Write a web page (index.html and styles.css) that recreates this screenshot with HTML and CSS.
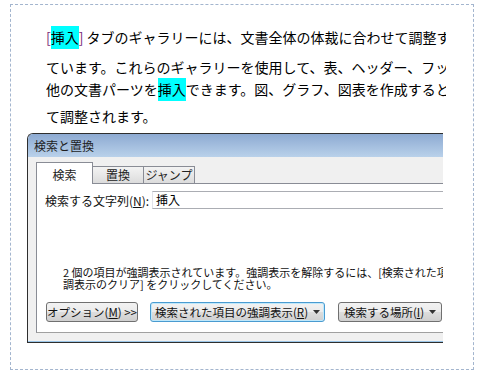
FILE: index.html
```html
<!DOCTYPE html>
<html lang="ja">
	<head>
		<meta charset="UTF-8" />
		<title>検索と置換</title>
		<link rel="stylesheet" href="styles.css">
	</head>
	<body>
		<div class="page">
			<div class="doc">
				<p class="line l1"><span class="bk">[</span><span class="hl">挿入</span><span class="bk">]</span> タブのギャラリーには、文書全体の体裁に合わせて調整するためのアイテムが含まれ</p>
				<p class="line l2">ています。これらのギャラリーを使用して、表、ヘッダー、フッター、リスト、表紙や、その</p>
				<p class="line l3">他の文書パーツを<span class="hl">挿入</span>できます。図、グラフ、図表を作成すると、現在の文書の体裁に合わせ</p>
				<p class="line l4">て調整されます。</p>
			</div>
			<div class="dialog">
				<div class="titlebar">検索と置換</div>
				<div class="frame">
					<div class="tabs">
						<div class="tab active">検索</div>
						<div class="tab">置換</div>
						<div class="tab">ジャンプ</div>
					</div>
					<div class="tabpage">
						<div class="field">
							<label>検索する文字列(<u>N</u>):</label>
							<div class="input">挿入</div>
						</div>
						<p class="msg">
							2 個の項目が強調表示されています。強調表示を解除するには、[検索された項目の強調表示] の [強<br />
							調表示のクリア] をクリックしてください。
						</p>
						<div class="buttons">
							<div class="btn opt"><span>オプション(<u>M</u>) &gt;&gt;</span></div>
							<div class="btn focus hilite"><span>検索された項目の強調表示(<u>R</u>)</span><svg class="caret" width="7" height="4" viewBox="0 0 7 4"><path d="M0 0h7L3.5 4z" fill="#333"/></svg></div>
							<div class="btn where"><span>検索する場所(<u>I</u>)</span><svg class="caret" width="7" height="4" viewBox="0 0 7 4"><path d="M0 0h7L3.5 4z" fill="#333"/></svg></div>
						</div>
					</div>
				</div>
			</div>
		</div>
	</body>
</html>
```

FILE: styles.css
```css
* {
	margin: 0;
	padding: 0;
	box-sizing: border-box;
}
body {
	font-family: "Noto Sans CJK JP", sans-serif;
	background-color: #fff;
	color: #000;
}
.page {
	width: 464px;
	height: 366px;
	margin: 4px 0 0 10px;
	border: 1px dashed #a3b5ce;
	padding: 21px 0 0 0;
}
.doc {
	padding-left: 35px;
}
.line {
	width: 400px;
	height: 23px;
	line-height: 23px;
	font-size: 14px;
	white-space: nowrap;
	overflow: hidden;
}
.l2 {
	margin-top: 7px;
}
.l3 {
	margin-top: -1px;
}
.l4 {
	margin-top: 4px;
}
.hl {
	display: inline-block;
	background-color: #00ffff;
}
.bk {
	color: #7a2a78;
}
.dialog {
	width: 416px;
	height: 210px;
	margin: 5px 0 0 16px;
	border: 1px solid #2e2e2e;
	border-right: none;
	border-top-left-radius: 6px;
	overflow: hidden;
	font-size: 12px;
}
.titlebar {
	height: 23px;
	line-height: 23px;
	padding-left: 6px;
	color: #1e1e1e;
	background: linear-gradient(#8daad2, #b9d1ea);
}
.frame {
	height: 185px;
	padding: 0 0 8px 8px;
	background-color: #f0f0f0;
	border-bottom: 1px solid #9cc6e8;
}
.tabs {
	display: flex;
	align-items: flex-end;
	height: 26px;
}
.tab {
	width: 52px;
	height: 17px;
	margin-left: -1px;
	border: 1px solid #898c95;
	border-bottom: none;
	background: linear-gradient(#f3f3f3, #dcdcdc);
	text-align: center;
	line-height: 15px;
	color: #222;
}
.tab:first-child {
	margin-left: 0;
}
.tab.active {
	position: relative;
	width: 57px;
	height: 22px;
	margin-bottom: -1px;
	background: #fff;
	line-height: 24px;
}
.tabpage {
	height: 150px;
	background-color: #fff;
	border: 1px solid #898c95;
	border-right: none;
	border-bottom-color: #a0a0a0;
}
.field {
	display: flex;
	align-items: center;
	margin-top: 7px;
	padding-left: 8px;
}
.field label {
	flex: 0 0 107px;
	color: #111;
}
.input {
	flex: 1;
	height: 18px;
	line-height: 16px;
	padding-left: 3px;
	border: 1px solid #abadb3;
	border-left-color: #e2e3ea;
	border-right: none;
}
.msg {
	margin-top: 57px;
	padding-left: 26px;
	font-size: 11px;
	line-height: 12px;
	white-space: nowrap;
	color: #111;
}
.buttons {
	display: flex;
	gap: 12px;
	margin-top: 12px;
	padding-left: 9px;
}
.btn {
	display: flex;
	align-items: center;
	justify-content: center;
	gap: 5px;
	height: 20px;
	border: 1px solid #707070;
	border-radius: 3px;
	background: linear-gradient(#f2f2f2 0%, #ebebeb 50%, #dddddd 51%, #cfcfcf 100%);
	color: #111;
	font-size: 11.5px;
	white-space: nowrap;
}
.btn.focus {
	border-color: #4a9bd0;
	box-shadow: inset 0 0 0 1px #bfe8fb;
}
.opt {
	width: 92px;
}
.hilite {
	width: 175px;
}
.where {
	width: 104px;
	margin-left: 1px;
}
```
